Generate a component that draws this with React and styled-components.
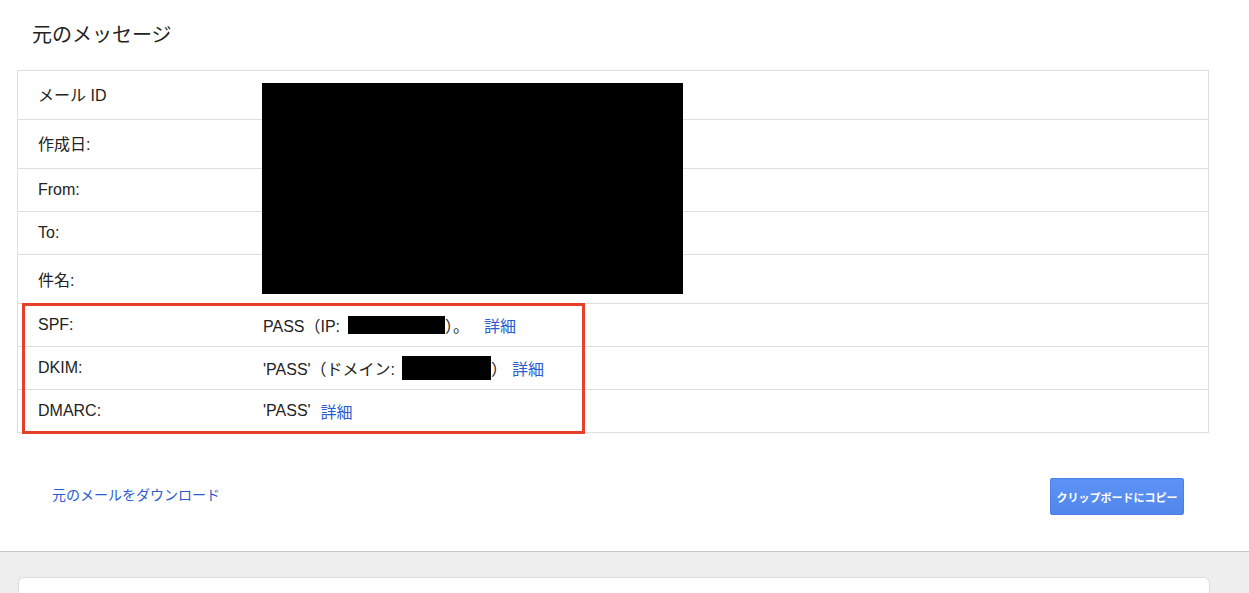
import React from 'react';
import styled, { createGlobalStyle } from 'styled-components';

const GlobalStyle = createGlobalStyle`
  html, body {
    margin: 0;
    padding: 0;
    background: #fff;
    font-family: "Liberation Sans", "Noto Sans CJK JP", sans-serif;
    color: #222;
  }
`;

const Page = styled.div`
  display: flex;
  flex-direction: column;
  min-height: 100vh;
`;

const Top = styled.div`
  background: #fff;
  padding: 0 40px 36px 17px;
`;

const Title = styled.h1`
  margin: 0;
  height: 70px;
  padding: 0 0 4px 15px;
  box-sizing: border-box;
  display: flex;
  align-items: center;
  font-size: 20px;
  font-weight: normal;
  color: #222;
`;

const TableWrap = styled.div`
  position: relative;
  width: 1192px;
`;

const Table = styled.div`
  border: 1px solid #dedede;
  border-bottom: none;
`;

const Row = styled.div`
  display: flex;
  align-items: center;
  height: ${p => p.$h || 42}px;
  border-bottom: 1px solid #dedede;
  font-size: 16px;
`;

const Label = styled.div`
  width: 225px;
  padding-left: 20px;
  padding-bottom: ${p => p.$lift || 0}px;
  flex-shrink: 0;
`;

const Value = styled.div`
  display: flex;
  align-items: center;
  white-space: nowrap;
`;

const Mask = styled.span`
  display: inline-block;
  background: #000;
  width: ${p => p.$w}px;
  height: ${p => p.$h}px;
  margin: 0 ${p => p.$r || 0}px 0 ${p => p.$l || 0}px;
`;

const Detail = styled.a`
  color: #2a5bd2;
  text-decoration: none;
  margin-left: ${p => p.$gap || 10}px;
  cursor: pointer;
`;

const Redaction = styled.div`
  position: absolute;
  left: 245px;
  top: 13px;
  width: 421px;
  height: 211px;
  background: #000;
`;

const Highlight = styled.div`
  position: absolute;
  left: 5px;
  top: 233px;
  width: 557px;
  height: 125px;
  border: 3px solid #e6402a;
  pointer-events: none;
`;

const Actions = styled.div`
  display: flex;
  align-items: center;
  justify-content: space-between;
  width: 1192px;
  margin-top: 45px;
  padding-left: 35px;
  padding-right: 25px;
  box-sizing: border-box;
`;

const Download = styled.a`
  color: #2a5bd2;
  font-size: 14px;
  text-decoration: none;
  margin-bottom: 6px;
  cursor: pointer;
`;

const CopyButton = styled.button`
  width: 134px;
  height: 37px;
  border: 1px solid #4a80e8;
  border-radius: 2px;
  background: linear-gradient(#5d93f6, #5186ea);
  color: #fff;
  font-family: "Liberation Sans", "Noto Sans CJK JP", sans-serif;
  font-size: 11px;
  font-weight: bold;
  padding: 0;
  cursor: pointer;
`;

const Lower = styled.div`
  flex: 1;
  background: #eeeeee;
  border-top: 1px solid #c6c6c6;
  padding: 25px 40px 0 18px;
`;

const Card = styled.div`
  width: 1190px;
  height: 16px;
  background: #fff;
  border: 1px solid #dddddd;
  border-bottom: none;
  border-radius: 6px 6px 0 0;
`;

const App = () => (
  <Page>
    <GlobalStyle />
    <Top>
      <Title>元のメッセージ</Title>
      <TableWrap>
        <Table>
          <Row $h={48}><Label $lift={3}>メール ID</Label></Row>
          <Row $h={48}><Label $lift={2}>作成日:</Label></Row>
          <Row><Label>From:</Label></Row>
          <Row><Label>To:</Label></Row>
          <Row $h={48}><Label $lift={1}>件名:</Label></Row>
          <Row>
            <Label>SPF:</Label>
            <Value>
              PASS（IP:<Mask $w={97} $h={18} $l={8} />）。
              <Detail $gap={15}>詳細</Detail>
            </Value>
          </Row>
          <Row>
            <Label>DKIM:</Label>
            <Value>
              'PASS'（ドメイン:<Mask $w={89} $h={24} $l={7} />）
              <Detail $gap={5}>詳細</Detail>
            </Value>
          </Row>
          <Row>
            <Label>DMARC:</Label>
            <Value>
              'PASS'
              <Detail $gap={10}>詳細</Detail>
            </Value>
          </Row>
        </Table>
        <Redaction />
        <Highlight />
      </TableWrap>
      <Actions>
        <Download>元のメールをダウンロード</Download>
        <CopyButton>クリップボードにコピー</CopyButton>
      </Actions>
    </Top>
    <Lower>
      <Card />
    </Lower>
  </Page>
);

export default App;
